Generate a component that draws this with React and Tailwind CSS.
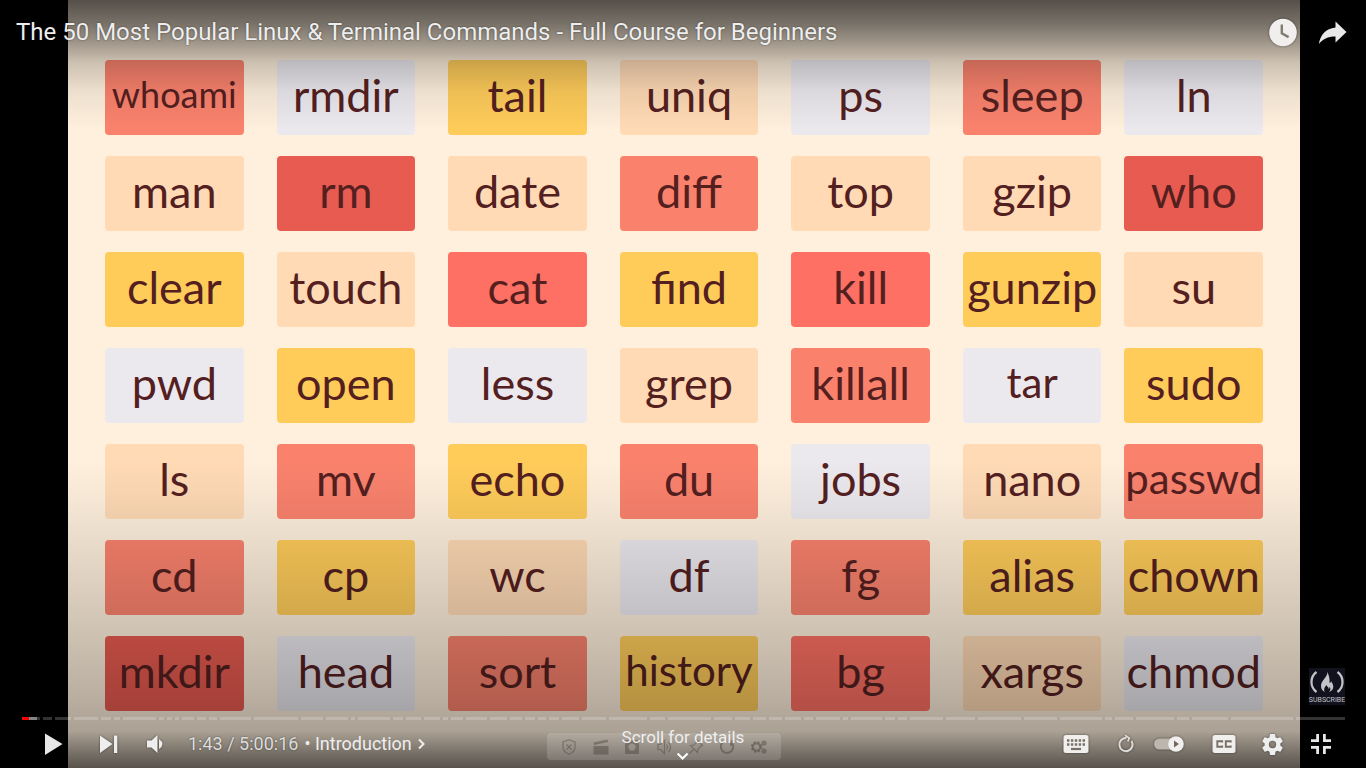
const PALETTE = {
  coral: 'bg-[#fa826d]',
  lilac: 'bg-[#ebe9ee]',
  gold: 'bg-[#ffcc5a]',
  peach: 'bg-[#ffdab5]',
  red: 'bg-[#e85b50]',
  tomato: 'bg-[#fd7063]',
};

const SIZES = {
  sm: 'pb-2 text-[36px]',
  md: 'pb-2 text-[42px]',
  lg: 'pb-1 text-[45px]',
};

const COLUMNS = [
  [['whoami', 'coral', 'sm'], ['man', 'peach'], ['clear', 'gold'], ['pwd', 'lilac'], ['ls', 'peach'], ['cd', 'coral'], ['mkdir', 'red']],
  [['rmdir', 'lilac'], ['rm', 'red'], ['touch', 'peach'], ['open', 'gold'], ['mv', 'coral'], ['cp', 'gold'], ['head', 'lilac']],
  [['tail', 'gold'], ['date', 'peach'], ['cat', 'tomato'], ['less', 'lilac'], ['echo', 'gold'], ['wc', 'peach'], ['sort', 'coral']],
  [['uniq', 'peach'], ['diff', 'coral'], ['find', 'gold'], ['grep', 'peach'], ['du', 'coral'], ['df', 'lilac'], ['history', 'gold', 'md']],
  [['ps', 'lilac'], ['top', 'peach'], ['kill', 'tomato'], ['killall', 'coral'], ['jobs', 'lilac'], ['fg', 'coral'], ['bg', 'tomato']],
  [['sleep', 'coral'], ['gzip', 'peach'], ['gunzip', 'gold'], ['tar', 'lilac', 'md'], ['nano', 'peach'], ['alias', 'gold'], ['xargs', 'peach']],
  [['ln', 'lilac'], ['who', 'red'], ['su', 'peach'], ['sudo', 'gold'], ['passwd', 'coral', 'md'], ['chown', 'gold'], ['chmod', 'lilac']],
];

const CHAPTERS = [
  18, 9, 17, 24, 10, 6, 34, 5, 5, 4, 12, 9, 8, 32, 44, 23, 22, 4, 33, 10, 15, 16, 5, 12, 22, 17, 12, 10, 8, 11, 17, 24, 39, 15, 44, 18,
  15, 13, 14, 16, 9, 24, 5, 32, 10, 9, 34, 29, 44, 33, 43, 7, 18, 39, 12, 36, 63, 50,
];

const shade = 'drop-shadow-[0_0_1px_rgba(0,0,0,0.5)]';

function Tile({ name, tone, size = 'lg' }) {
  return (
    <li className={`flex h-[75px] items-center justify-center rounded-[4px] font-['Lato',sans-serif] leading-none whitespace-nowrap text-[#54201f] ${SIZES[size]} ${PALETTE[tone]}`}>
      {name}
    </li>
  );
}

function IconButton({ label, className = '', children }) {
  return (
    <button type="button" aria-label={label} className={`flex shrink-0 items-center justify-center text-[#eeeeee] ${shade} ${className}`}>
      {children}
    </button>
  );
}

function Slide() {
  return (
    <div className="mr-[66px] ml-[68px] min-h-screen bg-[#fff0dd] px-[37px] pt-[60px]">
      <div className="flex">
        {COLUMNS.map((column, i) => (
          <ul key={i} className={`flex min-w-0 flex-1 flex-col gap-[21px] ${i === 0 ? '' : i === 6 ? 'ml-[23px]' : 'ml-[33px]'}`}>
            {column.map(([name, tone, size]) => (
              <Tile key={name} name={name} tone={tone} size={size} />
            ))}
          </ul>
        ))}
      </div>
    </div>
  );
}

function Header() {
  return (
    <header className="flex items-center pt-4 pr-[18px] pl-4">
      <h1 className="flex-1 text-[24px] leading-8 text-[#eeeeee] [text-shadow:0_0_2px_rgba(0,0,0,0.5)]">
        The 50 Most Popular Linux &amp; Terminal Commands - Full Course for Beginners
      </h1>
      <div className="flex gap-5">
        <IconButton label="Watch later" className="size-[30px]">
          <svg viewBox="0 0 30 30" className="size-[30px]">
            <circle cx="15" cy="15.500" r="13.800" fill="#f1efed" />
            <path d="M13.800 7.500v8.800l6.800 3.800" fill="none" stroke="#827b70" strokeWidth="2.400" />
          </svg>
        </IconButton>
        <IconButton label="Share" className="size-[30px]">
          <svg viewBox="0 0 30 30" className="size-[30px]" fill="#e8e8e8">
            <path d="M17.500 4.500 28.500 15 17.500 25.500v-6C9.500 19.500 5 22 .8 27 2.500 18 7.500 11.500 17.500 10.500z" />
          </svg>
        </IconButton>
      </div>
    </header>
  );
}

function SubscribeBadge() {
  return (
    <button type="button" className="mr-[21px] flex h-[37px] w-9 flex-col items-center justify-between self-end bg-[#12121f] pt-[2px] text-[#c4c4c8]">
      <svg viewBox="0 0 36 24" className="h-6 w-9" fill="none" stroke="currentColor" aria-hidden="true">
        <path d="M7.500 2C.8 7 .8 17 7.500 22M28.500 2c6.700 5 6.700 15 0 20" strokeWidth="2.200" />
        <path d="M18 1.500c2 4.500-6 8.500-6 14.500 0 3 1.500 5 4 6-2-3 0-5 1.500-7 .5 2 2.500 2 2 4 1-.5 1-1.500 1-2.500 1.500 2 1 4-.5 5.500 3-1 5-3.500 4-7-.5-2-1.500-3-2-4 0 1-.5 2-1.500 2C21 9 20 5 18 1.500z" fill="currentColor" stroke="none" />
      </svg>
      <span className="text-[7px] leading-[10px]">SUBSCRIBE</span>
    </button>
  );
}

function ProgressBar() {
  return (
    <div role="progressbar" aria-label="Playback position" aria-valuemin={0} aria-valuemax={18016} aria-valuenow={103} className="mr-[21px] ml-[22px] flex h-[3px] gap-[3px]">
      {CHAPTERS.map((length, i) => (
        <span key={i} className="flex min-w-0 basis-0 bg-white/20" style={{ flexGrow: length }}>
          {i === 0 && (
            <>
              <span className="w-[40%] bg-[#ff0000]" />
              <span className="w-[45%] bg-white/40" />
            </>
          )}
        </span>
      ))}
    </div>
  );
}

function Toolbox() {
  return (
    <div className="absolute bottom-2 left-1/2 flex h-[27px] w-[234px] -translate-x-[136px] items-center justify-between rounded-[4px] bg-white/15 pr-[14px] pl-[14px] text-[#403a34]/40" aria-hidden="true">
      <svg viewBox="0 0 16 16" className="size-4" fill="none" stroke="currentColor" strokeWidth="1.2"><path d="M8 .8 14 3v5c0 4-3 6-6 7.300C5 14 2 12 2 8V3zM5.500 5.500l5 5m0-5-5 5" /></svg>
      <svg viewBox="0 0 16 16" className="size-4" fill="currentColor"><path d="M.5 7h15v8.500H.500zM.5 3.500 14.500.500l.6 2.500L1 6z" /></svg>
      <svg viewBox="0 0 16 16" className="size-4" fill="currentColor" fillRule="evenodd"><path d="M2 1h12a1 1 0 0 1 1 1v12a1 1 0 0 1-1 1H2a1 1 0 0 1-1-1V2a1 1 0 0 1 1-1zm6 3.500a3.700 3.700 0 1 0 .01 0z" /></svg>
      <svg viewBox="0 0 16 16" className="size-4" fill="none" stroke="currentColor" strokeWidth="1.200"><path d="M2 5.500h2.500l4-4v13l-4-4H2zM10.500 5.500q2 2.500 0 5M12.500 3q4 5 0 10" /></svg>
      <svg viewBox="0 0 16 16" className="size-4" fill="none" stroke="currentColor" strokeWidth="1.200"><path d="m9.500 1.500 5 5-1.500.5-3 3-.5 3.500-7-7L6 6l3-3zM5.500 10.500l-4 4" /></svg>
      <svg viewBox="0 0 16 16" className="size-4" fill="none" stroke="currentColor" strokeWidth="2"><path d="M4 3a6.200 6.200 0 1 0 8 0M12 7V2.500h3" /></svg>
      <svg viewBox="0 0 16 16" className="size-4" fill="none" stroke="currentColor" strokeWidth="2.200"><circle cx="5.500" cy="8" r="3.700" /><circle cx="5.500" cy="8" r="5" strokeWidth="1.600" strokeDasharray="2 2" /><circle cx="13" cy="4" r="1.500" /><circle cx="13" cy="12" r="1.500" /></svg>
    </div>
  );
}

function Controls() {
  return (
    <div className="relative flex h-12 items-center pr-8 pl-10">
      <Toolbox />
      <IconButton label="Play" className="w-6">
        <svg viewBox="0 0 24 24" className="size-6" fill="#e8e8e8"><path d="M5 1.500 22.500 12 5 23z" /></svg>
      </IconButton>
      <IconButton label="Next" className="ml-8 w-6">
        <svg viewBox="0 0 24 24" className="size-6" fill="currentColor"><path d="M4 3.500 16.500 12 4 21zM18 3.500h3.300V21H18z" /></svg>
      </IconButton>
      <IconButton label="Mute" className="ml-6 w-6">
        <svg viewBox="0 0 24 24" className="size-6" fill="currentColor"><path d="M3 8.500h4.500L13.500 3v18L7.500 15.500H3zM15 7q7 5 0 10z" /></svg>
      </IconButton>
      <div className="ml-5 flex flex-1 items-center text-[18px] leading-6 text-[#dddddd] [text-shadow:0_0_2px_rgba(0,0,0,0.5)]">
        <span>1:43 / 5:00:16</span>
        <button type="button" className="ml-[6px] flex items-center text-[#eeeeee]">
          • Introduction
          <svg viewBox="0 0 8 12" className="ml-[6px] h-3 w-2" fill="none" stroke="currentColor" strokeWidth="2"><path d="m1 1.500 4.500 4.500L1 10.500" /></svg>
        </button>
      </div>
      <div className="flex items-center">
        <IconButton label="Keyboard shortcuts" className="w-[26px]">
          <svg viewBox="0 0 26 20" className="h-5 w-[26px]">
            <rect x=".5" y="1" width="25" height="18" rx="2.500" fill="#f1efed" />
            <path d="M4 6.500h18M4 10.500h18" stroke="#777067" strokeWidth="2.500" strokeDasharray="2.400 1.500" />
            <path d="M8 15h10" stroke="#777067" strokeWidth="2.200" />
          </svg>
        </IconButton>
        <IconButton label="Repeat" className="ml-[28px] w-[18px]">
          <svg viewBox="0 0 18 20" className="h-5 w-[18px]" fill="none" stroke="#dedcd8" strokeWidth="2"><path d="M14.500 7A6.600 6.600 0 1 1 9.500 4" /><path d="M8 1.200 12.200 4 10.800 7.500" strokeWidth="1.800" /></svg>
        </IconButton>
        <label className={`ml-[19px] flex h-4 w-[30px] cursor-pointer items-center justify-end rounded-full ${shade}`}>
          <input type="checkbox" aria-label="Autoplay" defaultChecked className="size-0 appearance-none" />
          <svg viewBox="0 0 30 16" className="h-4 w-[30px]"><rect y="2.500" width="28" height="11" rx="5.500" fill="#bcb6ae" /><circle cx="22" cy="8" r="7.800" fill="#f1efed" /><path d="m20 4.500 5 3.500-5 3.500z" fill="#70695f" /></svg>
        </label>
        <IconButton label="Subtitles" className="ml-7 w-6">
          <svg viewBox="0 0 24 20" className="h-5 w-6"><rect x=".5" y="1" width="23" height="18" rx="2.500" fill="#f1efed" /><path d="M10.200 8.500V7.300H5.300v5.400h4.900v-1.200M18.700 8.500V7.300h-4.900v5.400h4.900v-1.200" fill="none" stroke="#777067" strokeWidth="1.900" /></svg>
        </IconButton>
        <IconButton label="Settings" className="ml-6 w-6">
          <svg viewBox="2 2 20 20" className="size-[21px]" fill="currentColor"><path d="M19.430 12.980c.04-.32.07-.64.07-.98s-.03-.66-.07-.98l2.110-1.650c.19-.15.24-.42.12-.64l-2-3.460c-.12-.22-.39-.3-.61-.22l-2.490 1c-.52-.4-1.080-.73-1.690-.98l-.38-2.650C14.460 2.180 14.250 2 14 2h-4c-.25 0-.46.18-.49.42l-.38 2.650c-.61.25-1.170.59-1.690.98l-2.490-1c-.23-.09-.49 0-.61.22l-2 3.460c-.13.22-.07.49.12.64l2.110 1.650c-.04.32-.07.65-.07.98s.03.66.07.98l-2.110 1.650c-.19.15-.24.42-.12.64l2 3.460c.12.22.39.3.61.22l2.490-1c.52.4 1.080.73 1.690.98l.38 2.650c.03.24.24.42.49.42h4c.25 0 .46-.18.49-.42l.38-2.650c.61-.25 1.170-.59 1.690-.98l2.490 1c.23.09.49 0 .61-.22l2-3.460c.12-.22.07-.49-.12-.64zM12 15.500a3.500 3.500 0 1 1 0-7 3.500 3.500 0 0 1 0 7z" /></svg>
        </IconButton>
        <IconButton label="Exit full screen" className="ml-6 w-[26px]">
          <svg viewBox="0 0 22 22" className="size-[22px]" fill="none" stroke="#e8e8e8" strokeWidth="2.800"><path d="M7.600 1v6.600H1M14.400 1v6.600H21M7.600 21v-6.600H1M14.400 21v-6.600H21" /></svg>
        </IconButton>
      </div>
      <button type="button" className="absolute top-[6px] left-1/2 flex -translate-x-1/2 flex-col items-center text-[17px] leading-[22px] whitespace-nowrap text-[#eeeeee]">
        Scroll for details
        <svg viewBox="0 0 12 8" className="mt-1 h-2 w-3" fill="none" stroke="#ffffff" strokeWidth="2"><path d="m1 1.500 5 5 5-5" /></svg>
      </button>
    </div>
  );
}

export default function App() {
  return (
    <main className="relative min-h-screen bg-black font-['Roboto',sans-serif]">
      <Slide />
      <div className="pointer-events-none absolute inset-x-0 top-0 h-[130px] bg-[linear-gradient(to_bottom,rgba(0,0,0,0.67)_0%,rgba(0,0,0,0.53)_18%,rgba(0,0,0,0.36)_34%,rgba(0,0,0,0.2)_48%,rgba(0,0,0,0.07)_70%,rgba(0,0,0,0)_100%)]" />
      <div className="pointer-events-none absolute inset-x-0 bottom-0 h-[308px] bg-[linear-gradient(to_top,rgba(0,0,0,0.66)_0%,rgba(0,0,0,0.5)_6%,rgba(0,0,0,0.33)_12%,rgba(0,0,0,0.28)_22%,rgba(0,0,0,0.2)_42%,rgba(0,0,0,0.1)_69%,rgba(0,0,0,0.03)_89%,rgba(0,0,0,0)_100%)]" />
      <div className="absolute inset-0 flex flex-col justify-between">
        <Header />
        <div className="flex flex-col">
          <SubscribeBadge />
          <div className="mt-3"><ProgressBar /></div>
          <Controls />
        </div>
      </div>
    </main>
  );
}
